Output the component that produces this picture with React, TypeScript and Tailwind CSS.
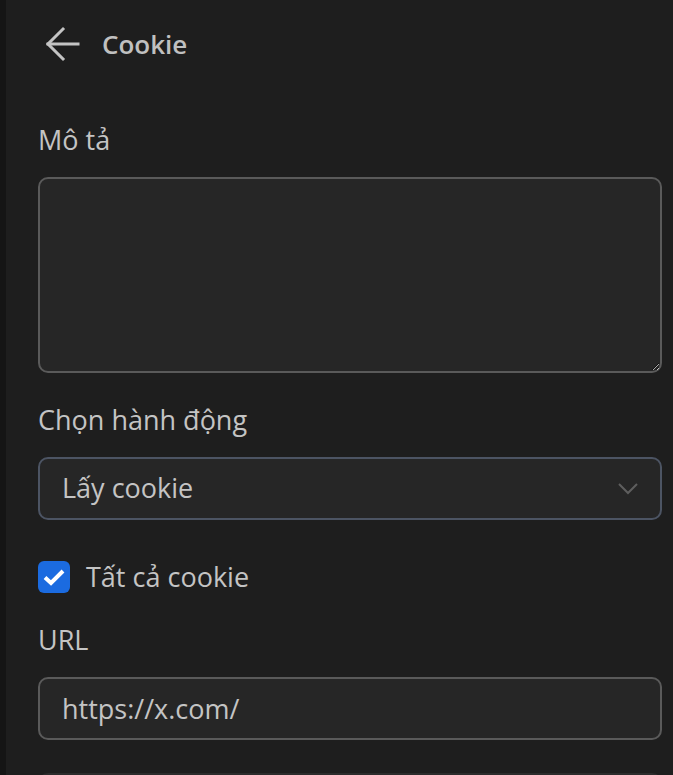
import React, { useState } from "react";

function App() {
    const [moTa, setMoTa] = useState("");
    const [tatCa, setTatCa] = useState(true);
    const [url, setUrl] = useState("https://x.com/");

    return (
        <div className="flex min-h-[775px] bg-[#1e1e1e] text-[#c4c4c4] [font-family:'Open_Sans',sans-serif]">
            <div className="w-[6px] shrink-0 bg-[#151515]" />

            <div className="flex flex-1 flex-col pl-[32px] pr-[11px]">
                {/* header */}
                <div className="flex h-[88px] items-center gap-[21px] pl-[7px]">
                    <button className="flex h-[36px] w-[36px] items-center justify-center">
                        <svg width="36" height="36" viewBox="0 0 36 36" fill="none" stroke="#c4c4c4" strokeWidth="3" strokeLinecap="square">
                            <path d="M3 18H33" />
                            <path d="M18 3L3 18L18 33" />
                        </svg>
                    </button>
                    <h1 className="text-[26px] font-semibold leading-[32px] text-[#c0c0c0]">Cookie</h1>
                </div>

                <label className="mt-[34px] text-[27px] leading-[36px]">Mô tả</label>
                <textarea
                    value={moTa}
                    onChange={(e) => setMoTa(e.target.value)}
                    className="mt-[19px] h-[196px] w-full resize-y rounded-[10px] border-2 border-[#5a5a5a] bg-[#262626] px-[22px] py-[12px] text-[27px] outline-none [color-scheme:dark]"
                />

                <label className="mt-[29px] text-[27px] leading-[36px]">Chọn hành động</label>
                <div className="mt-[19px] flex h-[63px] items-center justify-between rounded-[10px] border-2 border-[#4c5463] bg-[#262626] pl-[22px] pr-[22px]">
                    <span className="text-[27px]">Lấy cookie</span>
                    <svg width="20" height="12" viewBox="0 0 20 12" fill="none" stroke="#5e5e5e" strokeWidth="2">
                        <path d="M1 1L10 10L19 1" />
                    </svg>
                </div>

                <div className="mt-[39px] flex h-[36px] items-center gap-[16px]">
                    <button
                        onClick={() => setTatCa(!tatCa)}
                        className="flex h-[32px] w-[32px] items-center justify-center rounded-[6px] bg-[#1b6be0]"
                    >
                        {tatCa && (
                            <svg width="32" height="32" viewBox="0 0 32 32" fill="none" stroke="#ffffff" strokeWidth="4">
                                <path d="M7 16.5L13 22L25 10" />
                            </svg>
                        )}
                    </button>
                    <span className="text-[27px]">Tất cả cookie</span>
                </div>

                <label className="mt-[27px] text-[27px] leading-[36px]">URL</label>
                <input
                    value={url}
                    onChange={(e) => setUrl(e.target.value)}
                    className="mt-[19px] h-[63px] w-full rounded-[10px] border-2 border-[#5a5a5a] bg-[#262626] px-[22px] text-[27px] text-[#c4c4c4] outline-none"
                />

                <div className="mt-[33px] h-[10px] rounded-t-[10px] border-x-2 border-t-2 border-[#2c2c2c] bg-[#222222]" />
            </div>
        </div>
    );
}

export default App;
